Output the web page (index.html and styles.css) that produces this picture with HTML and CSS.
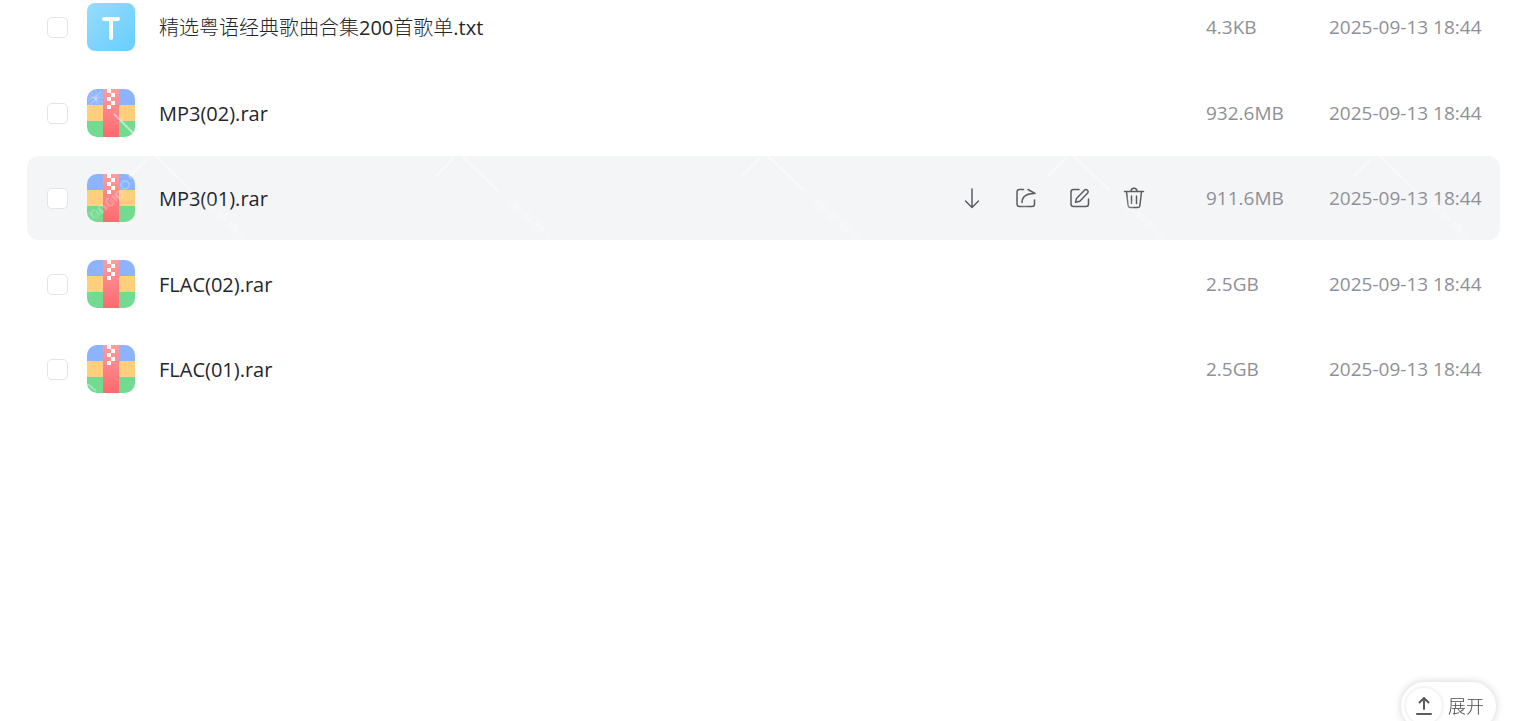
FILE: index.html
```html
<!DOCTYPE html>
<html lang="zh-CN">
<head>
<meta charset="utf-8">
<meta name="viewport" content="width=device-width, initial-scale=1">
<title>文件列表</title>
<link rel="stylesheet" href="styles.css">
</head>
<body>
<svg class="defs" aria-hidden="true">
  <defs>
    <linearGradient id="red" x1="0" y1="0" x2="0" y2="1"><stop offset="0" stop-color="#ff9c9f"/><stop offset="1" stop-color="#fc696d"/></linearGradient>
    <linearGradient id="sky" x1="0" y1="0" x2="1" y2="1"><stop offset="0" stop-color="#96dcfd"/><stop offset="1" stop-color="#68cdfd"/></linearGradient>
    <clipPath id="tile"><rect width="48" height="48" rx="10"/></clipPath>
    <g id="archive">
      <path fill="#8db3fc" d="M0 0h48v16H0z"/>
      <path fill="#ffcf7d" d="M0 16h48v16H0z"/>
      <path fill="#72da91" d="M0 32h48v16H0z"/>
      <path fill="url(#red)" d="M16 0h16v48H16z"/>
      <path fill="#fff" d="M20 0h4v4h-4zM24 4h4v4h-4zM20 8h4v4h-4zM24 12h4v4h-4zM20 16h4v4h-4z"/>
    </g>
    <pattern id="mark" width="306" height="84" patternUnits="userSpaceOnUse">
      <g fill="none" stroke="#fff" stroke-opacity=".45">
        <path stroke-width="2" d="M121 2 102 21M129 0l36 35"/>
        <path stroke-width="5" stroke-opacity=".12" stroke-dasharray="4 3" d="m176 44 42 38M96 34 46 84"/>
        <path stroke-width="12" stroke-opacity=".15" stroke-dasharray="12 4" d="m178 45 40 38"/>
      </g>
    </pattern>
  </defs>
</svg>
<main class="files">
  <div class="row">
    <input class="check" type="checkbox" id="f1">
    <svg class="type" viewBox="0 0 48 48" aria-hidden="true"><rect width="48" height="48" rx="8" fill="url(#sky)"/><path d="M17 16h14M24 16v19" fill="none" stroke="#fff" stroke-width="4" stroke-linecap="round" stroke-linejoin="round"/></svg>
    <label class="name" for="f1"><span class="han">精选粤语经典歌曲合集</span>200<span class="han">首歌单</span>.txt</label>
    <span class="size">4.3KB</span><time class="date">2025-09-13 18:44</time>
  </div>
  <div class="row">
    <input class="check" type="checkbox" id="f2">
    <svg class="type" viewBox="0 0 48 48" aria-hidden="true"><g clip-path="url(#tile)"><use href="#archive"/><path d="m27 25 21 21" stroke="#fff" stroke-opacity=".5" stroke-width="2"/><path d="M1 12 15 3M4 2l9 15M2 6l14 8M9 1v16M1 16 16 5M1 9h15M4 17 14 1" stroke="#fff" stroke-opacity=".28" fill="none"/></g></svg>
    <label class="name" for="f2">MP3(02).rar</label>
    <span class="size">932.6MB</span><time class="date">2025-09-13 18:44</time>
  </div>
  <div class="row active">
    <svg class="watermark" aria-hidden="true"><rect width="100%" height="100%" fill="url(#mark)"/></svg>
    <input class="check" type="checkbox" id="f3">
    <svg class="type" viewBox="0 0 48 48" aria-hidden="true"><g clip-path="url(#tile)"><use href="#archive"/><g fill="none" stroke="#fff" stroke-opacity=".3" stroke-width="1.400"><path d="m2 38 5 6M5 41q-1-7 4-4l4 4M11 34l5 5M12 35q0-6 4-3l4 4M22 24q-5 2-1 6t6-1M25 22l5 5M28 20l5 5q5-3 1-6t-5 1"/><circle cx="38" cy="11" r="4"/><path d="m43 5 5-4"/></g></g></svg>
    <label class="name" for="f3">MP3(01).rar</label>
    <div class="actions">
      <button type="button" aria-label="下载"><svg viewBox="0 0 24 24"><path d="M12 3v18.500M5.500 15l6.500 6.500 6.500-6.500"/></svg></button>
      <button type="button" aria-label="分享"><svg viewBox="0 0 24 24"><path d="M9.500 3.500H5.500a2.500 2.500 0 0 0-2.500 2.500v12a2.500 2.500 0 0 0 2.500 2.500h12.500a2.500 2.500 0 0 0 2.500-2.500v-4"/><path d="M8 16.500c0-6 4-9 13-9l-7-4"/></svg></button>
      <button type="button" aria-label="重命名"><svg viewBox="0 0 24 24"><path d="M11 3.500H5.500a2.500 2.500 0 0 0-2.500 2.500v12a2.500 2.500 0 0 0 2.500 2.500h12.500a2.500 2.500 0 0 0 2.500-2.500v-5"/><path d="m8.500 12.500 8-8.300c2.100-1.700 4.700.8 3.200 2.800l-7.900 8.200-4.300 1.100z"/></svg></button>
      <button type="button" aria-label="删除"><svg viewBox="0 0 24 24"><path d="M2.500 5.500h19M9 5.500c0-4.500 6-4.500 6 0M4.500 5.500l1.600 14.200a2 2 0 0 0 2 1.800h7.800a2 2 0 0 0 2-1.800L19.500 5.500M9.500 10v7.500M14.500 10v7.500"/></svg></button>
    </div>
    <span class="size">911.6MB</span><time class="date">2025-09-13 18:44</time>
  </div>
  <div class="row">
    <input class="check" type="checkbox" id="f4">
    <svg class="type" viewBox="0 0 48 48" aria-hidden="true"><g clip-path="url(#tile)"><use href="#archive"/></g></svg>
    <label class="name" for="f4">FLAC(02).rar</label>
    <span class="size">2.5GB</span><time class="date">2025-09-13 18:44</time>
  </div>
  <div class="row">
    <input class="check" type="checkbox" id="f5">
    <svg class="type" viewBox="0 0 48 48" aria-hidden="true"><g clip-path="url(#tile)"><use href="#archive"/><path d="m1 39 8 7" stroke="#fff" stroke-opacity=".3" stroke-width="2"/></g></svg>
    <label class="name" for="f5">FLAC(01).rar</label>
    <span class="size">2.5GB</span><time class="date">2025-09-13 18:44</time>
  </div>
</main>
<button class="expand" type="button">
  <span class="ring"><svg viewBox="0 0 20 20" aria-hidden="true"><path d="M10 13V2M5.500 6.500 10 2l4.500 4.500M3 18h14"/></svg></span>
  展开
</button>
</body>
</html>
```
FILE: styles.css
```css
body {
  margin: 0;
  background: #fff;
  color: #25262b;
  font-family: "Open Sans", "Noto Sans CJK SC", sans-serif;
  font-size: 19px;
  line-height: 28px;
  overflow: hidden;
}

.defs {
  position: absolute;
  width: 0;
  height: 0;
}

/* The list is scrolled so that its first row is partly out of view. */
.files {
  display: flex;
  flex-direction: column;
  gap: 1px;
  margin: -15px 33px 0 27px;
}

.row {
  position: relative;
  display: flex;
  align-items: center;
  box-sizing: border-box;
  height: 84px;
  padding: 0 12px 0 20px;
  border-radius: 12px;
  overflow: hidden;
}

.row:nth-child(even) {
  margin-top: 1px;
}

.active {
  background: #f4f5f7;
}

.watermark {
  position: absolute;
  inset: 0;
  width: 100%;
  height: 100%;
  pointer-events: none;
}

.check {
  appearance: none;
  flex: none;
  box-sizing: border-box;
  width: 21px;
  height: 21px;
  margin: 0 19px 0 0;
  border: 1px solid #e4e4e7;
  border-radius: 5px;
  background: #fff;
}

.check:checked {
  background: #637dff;
}

.type {
  flex: none;
  width: 48px;
  height: 48px;
  margin-right: 24px;
}

.name {
  flex: 1;
  min-width: 0;
  padding-top: 2px;
  font-size: 20px;
  white-space: nowrap;
}

.han {
  font-weight: 300;
}

.actions {
  display: flex;
  gap: 30px;
  margin-right: 60px;
}

.actions button {
  display: flex;
  padding: 0;
  border: 0;
  background: none;
  cursor: pointer;
}

.actions svg {
  width: 24px;
  height: 24px;
  fill: none;
  stroke: #5c5d63;
  stroke-width: 1.5;
  stroke-linecap: round;
  stroke-linejoin: round;
}

.size {
  width: 123px;
  color: #8e9097;
}

.date {
  width: 159px;
  color: #8e9097;
  white-space: nowrap;
}

.expand {
  position: fixed;
  right: 37px;
  bottom: -9px;
  display: flex;
  align-items: center;
  gap: 6px;
  padding: 6px 12px 6px 5px;
  border: 0;
  border-radius: 24px;
  background: #fff;
  box-shadow: 0 0 8px rgba(0, 0, 0, 0.18);
  color: #4a4b50;
  font-family: inherit;
  font-size: 18px;
  font-weight: 300;
  line-height: 28px;
  cursor: pointer;
}

.ring {
  display: flex;
  align-items: center;
  justify-content: center;
  width: 36px;
  height: 36px;
  border-radius: 50%;
  box-shadow: 0 0 4px rgba(0, 0, 0, 0.14);
}

.ring svg {
  width: 20px;
  height: 20px;
  fill: none;
  stroke: #5b5c61;
  stroke-width: 2;
  stroke-linecap: round;
  stroke-linejoin: round;
}
```
